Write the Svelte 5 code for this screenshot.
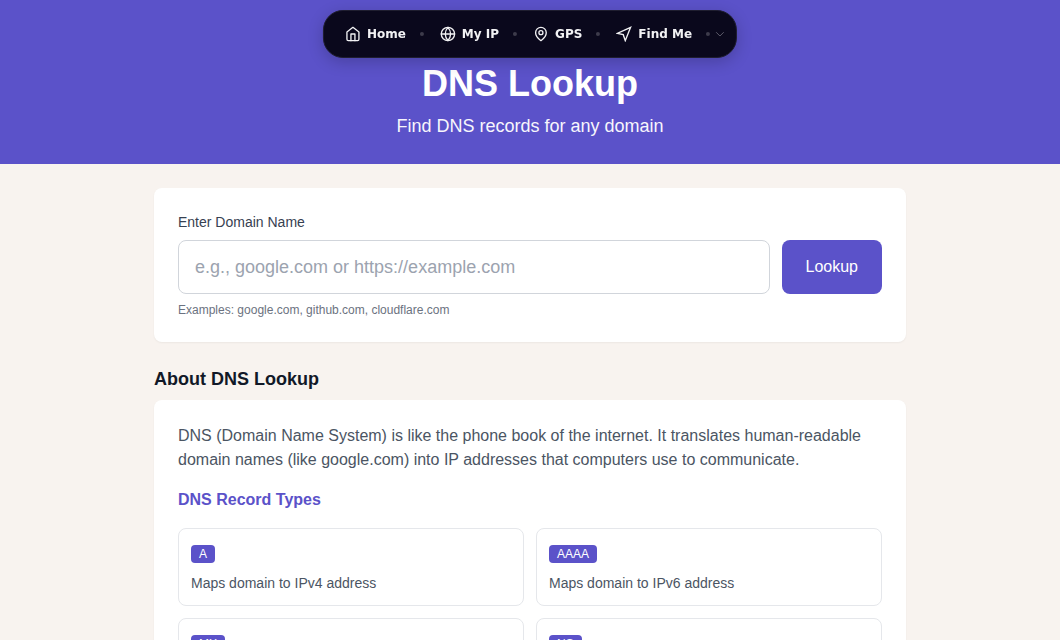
<script>
  const links = [
    { label: 'Home', icon: 'home' },
    { label: 'My IP', icon: 'globe' },
    { label: 'GPS', icon: 'pin' },
    { label: 'Find Me', icon: 'arrow' }
  ];

  const records = [
    { type: 'A', text: 'Maps domain to IPv4 address' },
    { type: 'AAAA', text: 'Maps domain to IPv6 address' },
    { type: 'MX', text: 'Mail server for the domain' },
    { type: 'NS', text: 'Name servers for the domain' }
  ];

  let domain = $state('');
</script>

<nav class="nav" aria-label="Main">
  {#each links as link}
    <a class="link" href="#{link.icon}">
      <svg viewBox="0 0 24 24" aria-hidden="true">
        {#if link.icon === 'home'}
          <path d="M3 9l9-7 9 7v11a2 2 0 0 1-2 2H5a2 2 0 0 1-2-2z" />
          <path d="M9 22V12h6v10" />
        {:else if link.icon === 'globe'}
          <circle cx="12" cy="12" r="10" />
          <path d="M2 12h20" />
          <path d="M12 2a15.3 15.3 0 0 1 4 10 15.3 15.3 0 0 1-4 10 15.3 15.3 0 0 1-4-10 15.3 15.3 0 0 1 4-10z" />
        {:else if link.icon === 'pin'}
          <path d="M20 10c0 6-8 12-8 12s-8-6-8-12a8 8 0 0 1 16 0z" />
          <circle cx="12" cy="10" r="3" />
        {:else}
          <path stroke-linejoin="miter" d="M22 2L2 11l9 2 3 9z" />
        {/if}
      </svg>
      <span>{link.label}</span>
    </a>
    <span class="dot"></span>
  {/each}
  <button class="more" aria-label="More">
    <svg viewBox="0 0 24 24" aria-hidden="true"><path d="M5 9l7 7 7-7" /></svg>
  </button>
</nav>

<header>
  <h1>DNS Lookup</h1>
  <p>Find DNS records for any domain</p>
</header>

<main>
  <form class="card" onsubmit={(e) => e.preventDefault()}>
    <label for="domain">Enter Domain Name</label>
    <div class="row">
      <input id="domain" type="text" placeholder="e.g., google.com or https://example.com" bind:value={domain} />
      <button class="lookup">Lookup</button>
    </div>
    <p class="hint">Examples: google.com, github.com, cloudflare.com</p>
  </form>

  <h2>About DNS Lookup</h2>
  <section class="card">
    <p class="intro">
      DNS (Domain Name System) is like the phone book of the internet. It translates human-readable
      domain names (like google.com) into IP addresses that computers use to communicate.
    </p>
    <h3>DNS Record Types</h3>
    <div class="grid">
      {#each records as record}
        <article class="record">
          <div class="type"><span>{record.type}</span></div>
          <p>{record.text}</p>
        </article>
      {/each}
    </div>
  </section>
</main>

<style>
  :global(body) {
    margin: 0;
    background: #f8f3ef;
    font: 16px/24px "Liberation Sans", Arial, sans-serif;
    color: #4b5563;
  }

  h1, h2, h3, p {
    margin: 0;
  }

  .nav {
    position: fixed;
    z-index: 10;
    top: 10px;
    left: 50%;
    transform: translateX(-50%);
    box-sizing: border-box;
    height: 48px;
    padding: 0 10px 0 11px;
    display: flex;
    align-items: center;
    white-space: nowrap;
    background: #0a081c;
    border: 1px solid #1f1e2f;
    border-radius: 20px;
    box-shadow: 0 4px 16px rgba(0, 0, 0, 0.2);
    font-family: "DejaVu Sans", sans-serif;
  }

  .link {
    display: flex;
    align-items: center;
    gap: 6px;
    padding: 8px 9px 8px 10px;
    color: #f2f2f4;
    font-size: 12px;
    line-height: 16px;
    font-weight: 700;
    text-decoration: none;
  }

  .nav svg {
    width: 16px;
    height: 16px;
    fill: none;
    stroke: currentColor;
    stroke-width: 2;
    stroke-linecap: round;
    stroke-linejoin: round;
  }

  .dot {
    width: 4px;
    height: 4px;
    margin: 0 6px 0 5px;
    border-radius: 50%;
    background: #3d3b4b;
  }

  .more {
    display: flex;
    margin-left: -2px;
    padding: 0;
    border: 0;
    background: none;
    color: #5d5b6a;
  }

  .nav .more svg {
    width: 12px;
    height: 12px;
  }

  header {
    padding: 64px 24px 24px;
    background: #5b52c9;
    color: #fff;
    text-align: center;
  }

  h1 {
    margin-bottom: 8px;
    font-size: 36px;
    line-height: 40px;
  }

  header p {
    font-size: 18px;
    line-height: 28px;
    color: #f7f6fc;
  }

  main {
    box-sizing: border-box;
    max-width: 800px;
    margin: 0 auto;
    padding: 24px;
  }

  .card {
    padding: 24px;
    background: #fff;
    border-radius: 8px;
    box-shadow: 0 1px 2px rgba(0, 0, 0, 0.05);
  }

  label {
    display: block;
    margin-bottom: 8px;
    font-size: 14px;
    line-height: 20px;
    color: #374151;
  }

  .row {
    display: flex;
    gap: 12px;
  }

  input {
    flex: 1;
    min-width: 0;
    padding: 12px 16px;
    border: 1px solid #d1d5db;
    border-radius: 8px;
    background: #fff;
    color: #111827;
    font: 18px/28px "Liberation Sans", Arial, sans-serif;
    height: 28px;
  }

  input::placeholder {
    color: #9ca3af;
  }

  .lookup {
    padding: 0 24px;
    border: 0;
    border-radius: 8px;
    background: #5b52c9;
    color: #fff;
    font: 16px/24px "Liberation Sans", Arial, sans-serif;
  }

  .hint {
    margin-top: 8px;
    font-size: 12px;
    line-height: 16px;
    color: #6b7280;
  }

  h2 {
    margin: 24px 0 8px;
    font-size: 18px;
    line-height: 26px;
    color: #111827;
  }

  h3 {
    margin: 16px 0;
    font-size: 16px;
    line-height: 24px;
    color: #5b52c9;
  }

  .grid {
    display: grid;
    grid-template-columns: 1fr 1fr;
    gap: 12px;
  }

  .record {
    padding: 12px;
    border: 1px solid #e5e7eb;
    border-radius: 8px;
  }

  .type {
    margin-bottom: 8px;
  }

  .type span {
    padding: 2px 8px;
    border-radius: 4px;
    background: #5b52c9;
    color: #fff;
    font-size: 12px;
    line-height: 16px;
  }

  .record p {
    font-size: 14px;
    line-height: 20px;
  }
</style>
